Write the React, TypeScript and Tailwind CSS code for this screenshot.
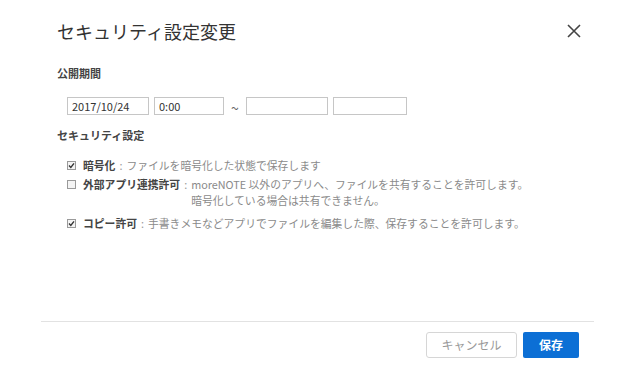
import React from 'react';

const font = { fontFamily: '"Noto Sans CJK JP", "Noto Sans", sans-serif' };

function Check({ checked }: { checked: boolean }) {
  return (
    <span className="w-[9px] h-[9px] border border-[#9a9a9a] bg-[#f4f4f4] flex items-center justify-center shrink-0">
      {checked && (
        <svg width="7" height="7" viewBox="0 0 7 7">
          <path d="M1 3.6 L2.8 5.4 L6 1.4" fill="none" stroke="#333" strokeWidth="1.4" />
        </svg>
      )}
    </span>
  );
}

const rows = [
  { checked: true, label: '暗号化', desc: ['ファイルを暗号化した状態で保存します'], mt: 'mt-[14px]' },
  {
    checked: false,
    label: '外部アプリ連携許可',
    desc: ['moreNOTE 以外のアプリへ、ファイルを共有することを許可します。', '暗号化している場合は共有できません。'],
    mt: 'mt-[3px]',
  },
  { checked: true, label: 'コピー許可', desc: ['手書きメモなどアプリでファイルを編集した際、保存することを許可します。'], mt: 'mt-[7px]' },
];

export default function App() {
  return (
    <div className="w-[640px] h-[380px] bg-white flex flex-col text-[#333]" style={font}>
      <div className="pt-[19px] pl-[57px] pr-[59px] flex items-center justify-between">
        <h1 className="text-[18px] leading-[24px] font-normal text-[#333]">セキュリティ設定変更</h1>
        <svg width="14" height="14" viewBox="0 0 14 14">
          <path d="M1 1 L13 13 M13 1 L1 13" stroke="#444" strokeWidth="1.6" />
        </svg>
      </div>

      <div className="pl-[57px]">
        <div className="mt-[22px] text-[11px] leading-[16px] font-bold text-[#444]">公開期間</div>

        <div className="mt-[16px] ml-[10px] flex items-center text-[11px]">
          <div className="w-[82px] h-[18px] border border-[#c6c6c6] pl-[4px] flex items-center">2017/10/24</div>
          <div className="ml-[5px] w-[70px] h-[18px] border border-[#c6c6c6] pl-[4px] flex items-center">0:00</div>
          <div className="w-[22px] h-[18px] flex items-center justify-center text-[#666] text-[14px] leading-none pt-[3px]">~</div>
          <div className="w-[82px] h-[18px] border border-[#c6c6c6]" />
          <div className="ml-[5px] w-[74px] h-[18px] border border-[#c6c6c6]" />
        </div>

        <div className="mt-[12px] text-[11px] leading-[16px] font-bold text-[#444]">セキュリティ設定</div>

        {rows.map((r) => (
          <div key={r.label} className={`${r.mt} ml-[10px] flex items-start text-[10.8px] leading-[16px]`}>
            <span className="h-[16px] flex items-center">
              <Check checked={r.checked} />
            </span>
            <span className="ml-[7px] font-bold text-[#444]">{r.label}</span>
            <span className="ml-[4px] mr-[4px] text-[#999]">:</span>
            <div className="text-[#8a8a8a]">
              {r.desc.map((d) => (
                <div key={d}>{d}</div>
              ))}
            </div>
          </div>
        ))}
      </div>

      <div className="mt-auto ml-[41px] mr-[46px] border-t border-[#e2e2e2] pt-[10px] pb-[22px] pr-[15px] flex justify-end gap-[6px]">
        <button className="w-[91px] h-[26px] border border-[#d6d6d6] rounded-[3px] bg-white text-[12px] text-[#999]">
          キャンセル
        </button>
        <button className="w-[56px] h-[26px] rounded-[2px] bg-[#0c6fd5] text-[12px] font-bold text-white">
          保存
        </button>
      </div>
    </div>
  );
}
